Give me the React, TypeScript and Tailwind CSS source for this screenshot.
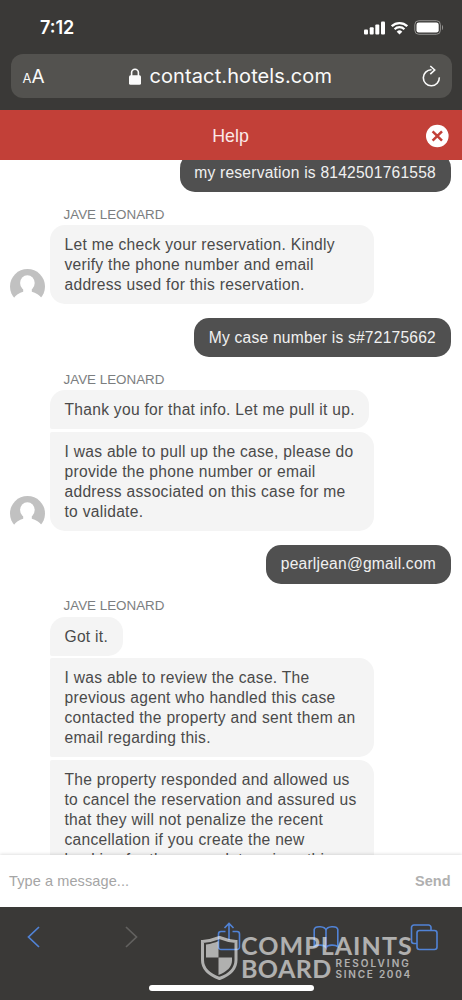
import { clsx } from 'clsx';

type Message = {
  text: string;
  corners: string;
  wide?: boolean;
};

type Group = {
  from: 'agent' | 'me';
  avatar?: boolean;
  messages: Message[];
};

const AGENT_NAME = 'JAVE LEONARD';

const CHAT: Group[] = [
  {
    from: 'me',
    messages: [{ text: 'my reservation is 8142501761558', corners: 'rounded-[15px]' }],
  },
  {
    from: 'agent',
    avatar: true,
    messages: [
      {
        text: 'Let me check your reservation. Kindly\nverify the phone number and email\naddress used for this reservation.',
        corners: 'rounded-[15px]',
        wide: true,
      },
    ],
  },
  {
    from: 'me',
    messages: [{ text: 'My case number is s#72175662', corners: 'rounded-[15px]' }],
  },
  {
    from: 'agent',
    avatar: true,
    messages: [
      { text: 'Thank you for that info. Let me pull it up.', corners: 'rounded-[15px] rounded-bl-[2px]' },
      {
        text: 'I was able to pull up the case, please do\nprovide the phone number or email\naddress associated on this case for me\nto validate.',
        corners: 'rounded-[15px] rounded-tl-[2px]',
        wide: true,
      },
    ],
  },
  {
    from: 'me',
    messages: [{ text: 'pearljean@gmail.com', corners: 'rounded-[15px]' }],
  },
  {
    from: 'agent',
    messages: [
      { text: 'Got it.', corners: 'rounded-[15px] rounded-bl-[2px]' },
      {
        text: 'I was able to review the case. The\nprevious agent who handled this case\ncontacted the property and sent them an\nemail regarding this.',
        corners: 'rounded-r-[15px] rounded-l-[2px]',
        wide: true,
      },
      {
        text: 'The property responded and allowed us\nto cancel the reservation and assured us\nthat they will not penalize the recent\ncancellation if you create the new\nbooking for the same dates since this',
        corners: 'rounded-r-[15px] rounded-l-[2px]',
        wide: true,
      },
    ],
  },
];

function StatusBar() {
  return (
    <div className="flex h-[54px] items-center justify-between pl-[40px] pr-[18px] text-white">
      <span className="pt-px font-['Inter'] text-[18px] font-semibold">7:12</span>
      <div className="flex items-center gap-[6px] pt-px">
        <svg width="21" height="14" viewBox="0 0 21 14" fill="currentColor">
          <rect x="0" y="8.5" width="4" height="5" rx="1" />
          <rect x="5.7" y="6.3" width="4" height="7.2" rx="1" />
          <rect x="11.3" y="3.5" width="4" height="10" rx="1" />
          <rect x="17" y="0.5" width="4" height="13" rx="1" />
        </svg>
        <svg width="17" height="14" viewBox="0 0 17 14" fill="none" stroke="currentColor">
          <path d="M0.8 5.2a11 11 0 0 1 15.4 0" strokeWidth="2.3" />
          <path d="M3.6 8.2a7 7 0 0 1 9.8 0" strokeWidth="2.2" />
          <path d="M8.5 13.6 5.7 10.7a4 4 0 0 1 5.6 0z" fill="currentColor" stroke="none" />
        </svg>
        <svg width="30" height="15" viewBox="0 0 30 15" fill="none">
          <rect x="0.8" y="0.7" width="25.6" height="13.6" rx="4" stroke="#92918f" strokeWidth="1" />
          <rect x="2.5" y="2.4" width="22.2" height="10.2" rx="2.3" fill="#fff" />
          <path d="M28 5c1.4.6 1.4 4.4 0 5z" fill="#92918f" />
        </svg>
      </div>
    </div>
  );
}

function AddressBar() {
  return (
    <div className="mx-[10.5px] grid h-[44px] grid-cols-[106px_1fr_auto] items-center rounded-[12px] bg-[#53524f] pl-[12px] pr-[11px] font-['Inter'] text-[#fafafa]">
      <div className="flex items-baseline leading-none">
        <span className="text-[13px]">A</span>
        <span className="text-[19px]">A</span>
      </div>
      <div className="flex items-center gap-[9px]">
        <svg width="12" height="17" viewBox="0 0 12 17">
          <path d="M2.6 8V4.6a3.4 3.4 0 0 1 6.8 0V8" fill="none" stroke="currentColor" strokeWidth="1.6" />
          <rect x="0" y="7.3" width="12" height="9.4" rx="1.5" fill="currentColor" />
        </svg>
        <span className="whitespace-nowrap text-[20px] leading-none tracking-[0.1px]">contact.hotels.com</span>
      </div>
      <svg width="19" height="22" viewBox="0 0 19 22" fill="none" stroke="currentColor" strokeWidth="1.6">
        <path d="M9.5 4.8A8 8 0 1 0 17.3 12.4" />
        <path d="M8.3 1 12.7 5 8.3 9.1" />
      </svg>
    </div>
  );
}

function HelpHeader() {
  return (
    <div className="grid h-[49.5px] shrink-0 grid-cols-[1fr_auto_1fr] items-center bg-[#c24038] pr-[13px] pt-[2px] text-white">
      <span />
      <h1 className="pl-3 pt-px text-[17.8px] text-[#fbe9e7]">Help</h1>
      <button className="justify-self-end" aria-label="Close">
        <svg width="24" height="24" viewBox="0 0 24 24">
          <circle cx="12.3" cy="12" r="11.3" fill="#fff" />
          <path d="m7.6 7.3 9.4 9.4M17 7.3l-9.4 9.4" stroke="#c24038" strokeWidth="2.5" />
        </svg>
      </button>
    </div>
  );
}

function Avatar() {
  return (
    <svg width="35" height="35" viewBox="0 0 35 35" className="shrink-0">
      <circle cx="17.5" cy="17.5" r="17.5" fill="#c1c1c1" />
      <g fill="#fff">
        <ellipse cx="17.4" cy="14" rx="7.3" ry="7.8" />
        <path d="M13.2 18h8.6v4.7c3.7 1.3 8.2 3 10.2 7.3L33 35.500H2L3.500 30c2-4.300 6-6 9.700-7.300z" />
      </g>
    </svg>
  );
}

function Bubble({ message, mine = false }: { message: Message; mine?: boolean }) {
  return (
    <p
      className={clsx(
        'whitespace-pre px-[14.5px] pb-[9px] pt-[9.9px] text-[15.6px] leading-[20.1px]',
        mine ? 'bg-[#505050] tracking-[0.22px] text-[#f0f0f0]' : 'bg-[#f4f4f4] tracking-[0.28px] text-[#4a4a4a]',
        message.wide ? 'w-[324px]' : 'w-fit',
        message.corners,
      )}
    >
      {message.text}
    </p>
  );
}

function ChatGroup({ group }: { group: Group }) {
  if (group.from === 'me') {
    return (
      <div className="flex justify-end pr-[11.5px]">
        <Bubble message={group.messages[0]} mine />
      </div>
    );
  }

  return (
    <div className="pb-[13.6px] pt-[14.6px]">
      <div className="pl-[63.5px] text-[13.4px] leading-[16px] text-[#7b7e80]">{AGENT_NAME}</div>
      <div className="mt-[2.7px] flex items-end gap-[5px] pl-[10px]">
        {group.avatar ? <Avatar /> : <div className="w-[35px]" />}
        <div className="flex flex-col gap-[2.4px]">
          {group.messages.map((m) => (
            <Bubble key={m.text} message={m} />
          ))}
        </div>
      </div>
    </div>
  );
}

function Composer() {
  return (
    <div className="flex h-[52px] shrink-0 items-center justify-between bg-white pl-[9px] pr-[11.5px] pt-[2px] shadow-[0_-1px_3px_rgba(0,0,0,0.12)]">
      <span className="text-[14.5px] tracking-[0.1px] text-[#a5a5a5]">Type a message...</span>
      <span className="text-[14.5px] font-bold text-[#b0b0b0]">Send</span>
    </div>
  );
}

function Watermark() {
  return (
    <div className="absolute left-[201px] top-[27px] flex text-white opacity-60">
      <svg width="37" height="46" viewBox="0 0 37 46" className="mt-px shrink-0">
        <path
          d="M1.5 6.5C8 6 13.5 4.5 18.5 2.5 23.5 4.5 29 6 35 6.5V25c0 9-7 15-16.500 18.500C9 40 1.500 34 1.500 25z"
          fill="none"
          stroke="currentColor"
          strokeWidth="3"
        />
        <path d="M5 9.5c5-.6 9-1.900 12.500-3.500V22.500H5z" fill="currentColor" />
        <path d="M17.5 22.5H31v3c0 6.500-5 11-13.500 14.500z" fill="currentColor" />
      </svg>
      <div className="ml-[3px] font-['Lato'] text-[25px] font-bold leading-[22px]">
        <div className="tracking-[1.05px]">COMPLAINTS</div>
        <div className="flex items-center">
          <span className="tracking-[0.4px]">BOARD</span>
          <div className="ml-[4px] pt-[2px] font-['Inter'] text-[10px] font-semibold leading-[10.5px]">
            <div className="tracking-[2.05px]">RESOLVING</div>
            <div className="tracking-[1.75px]">SINCE 2004</div>
          </div>
        </div>
      </div>
    </div>
  );
}

function BrowserToolbar() {
  return (
    <div className="relative flex h-[93px] shrink-0 flex-col items-center justify-between bg-[#3a3937] pb-[9px] pt-[14px]">
      <div className="flex w-full items-center pl-[26px] text-[#5183d6]">
        <svg width="16" height="32" viewBox="0 0 16 32" fill="none" stroke="currentColor" strokeWidth="1.7">
          <path d="M13 6 2.5 16 13 26" />
        </svg>
        <svg width="16" height="32" viewBox="0 0 16 32" fill="none" stroke="#62615f" strokeWidth="1.7" className="ml-[81px]">
          <path d="M3 6 13.5 16 3 26" />
        </svg>
        <svg width="24" height="32" viewBox="0 0 24 32" fill="none" stroke="currentColor" strokeWidth="1.6" className="ml-[78px]">
          <path d="M8.5 10.5H4A2.5 2.5 0 0 0 1.5 13v13A2.5 2.5 0 0 0 4 28.500h16a2.500 2.500 0 0 0 2.500-2.500V13a2.500 2.500 0 0 0-2.500-2.500h-4.500" />
          <path d="M12 19V3M7.5 7 12 2.5 16.5 7" />
        </svg>
        <svg width="26" height="32" viewBox="0 0 26 32" fill="none" stroke="currentColor" strokeWidth="1.6" className="ml-[72px]">
          <path d="M13 9.500C12.500 5 2 4.500 1.200 8.500V25.500C4 23.500 11 23.500 13 26.500V9.500C13.500 5 24 4.500 24.800 8.500V25.500C22 23.500 15 23.500 13 26.500" />
        </svg>
        <svg width="28" height="32" viewBox="0 0 28 32" fill="none" stroke="currentColor" strokeWidth="1.6" className="ml-[71px]">
          <path d="M7 22.500H4A2.500 2.500 0 0 1 1.500 20V6.500A2.500 2.500 0 0 1 4 4h14.500A2.500 2.500 0 0 1 21 6.500V9" />
          <rect x="7" y="9.5" width="20" height="19" rx="2.5" />
        </svg>
      </div>
      <div className="h-[6px] w-[165px] rounded-full bg-white" />
      <Watermark />
    </div>
  );
}

export default function App() {
  return (
    <div className="flex h-[1000px] w-[462px] flex-col overflow-hidden bg-white font-['Liberation_Sans',sans-serif]">
      <div className="h-[110px] shrink-0 bg-[#3a3937]">
        <StatusBar />
        <AddressBar />
      </div>
      <HelpHeader />
      <main className="min-h-0 flex-1 overflow-hidden">
        <div className="-mt-[6.5px]">
          {CHAT.map((group, i) => (
            <ChatGroup key={i} group={group} />
          ))}
        </div>
      </main>
      <Composer />
      <BrowserToolbar />
    </div>
  );
}
